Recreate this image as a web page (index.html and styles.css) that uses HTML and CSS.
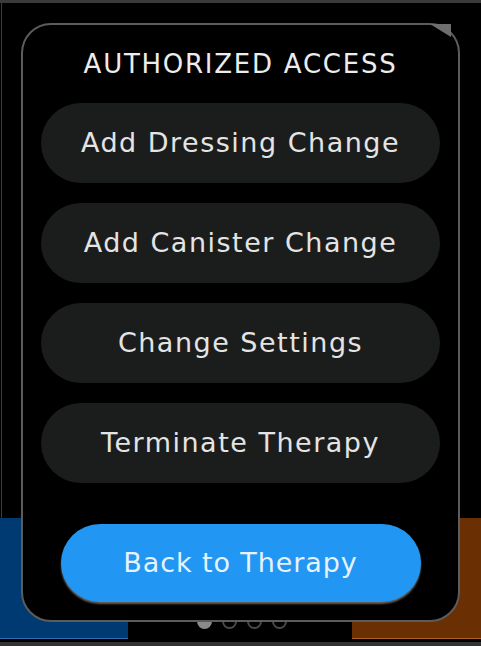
FILE: index.html
```html
<!DOCTYPE html>
<html lang="en">
  <head>
    <meta charset="UTF-8" />
    <meta name="viewport" content="width=device-width, initial-scale=1.0" />
    <title>Authorized Access</title>
    <link rel="stylesheet" href="styles.css">
  </head>

  <body>
    <div class="screen">
      <div class="top-bar"></div>
      <div class="content"></div>
      <div class="tiles">
        <div class="tile blue"></div>
        <div class="tile middle">
          <div class="dots">
            <span class="dot active"></span>
            <span class="dot"></span>
            <span class="dot"></span>
            <span class="dot"></span>
          </div>
        </div>
        <div class="tile orange"></div>
      </div>
      <div class="gap"></div>
      <div class="bottom-bar"></div>
    </div>

    <div class="dialog">
      <svg class="notch" width="22" height="14" viewBox="0 0 22 14">
        <polygon points="0,0 21,0 21,13" fill="#6e6e6e" />
      </svg>
      <h1 class="title">AUTHORIZED ACCESS</h1>
      <div class="options">
        <button class="option">Add Dressing Change</button>
        <button class="option">Add Canister Change</button>
        <button class="option">Change Settings</button>
        <button class="option">Terminate Therapy</button>
      </div>
      <button class="back">Back to Therapy</button>
    </div>
  </body>
</html>
```

FILE: styles.css
```css
body {
  background-color: #000;
  color: #e6e6e6;
  font-family: "DejaVu Sans", sans-serif;
  margin: 0;
}

.screen {
  height: 646px;
  display: flex;
  flex-direction: column;
}

.top-bar {
  height: 3px;
  background-color: #3a3a3a;
}

.content {
  flex: 1;
  margin-left: 1px;
  border-left: 1px solid #3c3c3c;
}

.tiles {
  height: 121px;
  display: grid;
  grid-template-columns: 128px 1fr 129px;
}

.tile.blue {
  background-color: #003a72;
  border-bottom: 1px solid #2f6fb0;
}

.tile.orange {
  background-color: #6a2f02;
  border-bottom: 1px solid #b0602a;
}

.tile.middle {
  border-bottom: 1px solid #000;
}

.dots {
  display: flex;
  justify-content: center;
  gap: 10px;
  padding-top: 96px;
  padding-left: 4px;
}

.dot {
  width: 11px;
  height: 11px;
  border: 2px solid #4a4a4a;
  border-radius: 50%;
}

.dot.active {
  background-color: #8a8a8a;
  border-color: #8a8a8a;
}

.gap {
  height: 3px;
}

.bottom-bar {
  height: 4px;
  background-color: #333;
}

.dialog {
  position: absolute;
  left: 21px;
  top: 23px;
  width: 439px;
  height: 599px;
  box-sizing: border-box;
  border: 2px solid #5c5c5c;
  border-radius: 30px;
  background-color: #000;
  padding: 0 18px 18px;
  display: flex;
  flex-direction: column;
}

.notch {
  position: absolute;
  right: 6px;
  top: -1px;
}

.title {
  height: 78px;
  margin: 0;
  display: flex;
  align-items: center;
  justify-content: center;
  font-size: 26px;
  font-weight: normal;
  letter-spacing: 1.75px;
  color: #ececec;
}

.options {
  display: flex;
  flex-direction: column;
  gap: 20px;
}

.option,
.back {
  font-family: "DejaVu Sans", sans-serif;
  border: none;
  border-radius: 40px;
  height: 80px;
  font-size: 27px;
  letter-spacing: 1.5px;
}

.option {
  background-color: #1b1d1c;
  color: #e4e4e4;
}

.back {
  margin: 41px auto 0;
  width: 360px;
  height: 79px;
  background-color: #2196f2;
  color: #e6f2fc;
  letter-spacing: 0.9px;
  box-shadow: 0 2px 2px #6a6058;
}
```
